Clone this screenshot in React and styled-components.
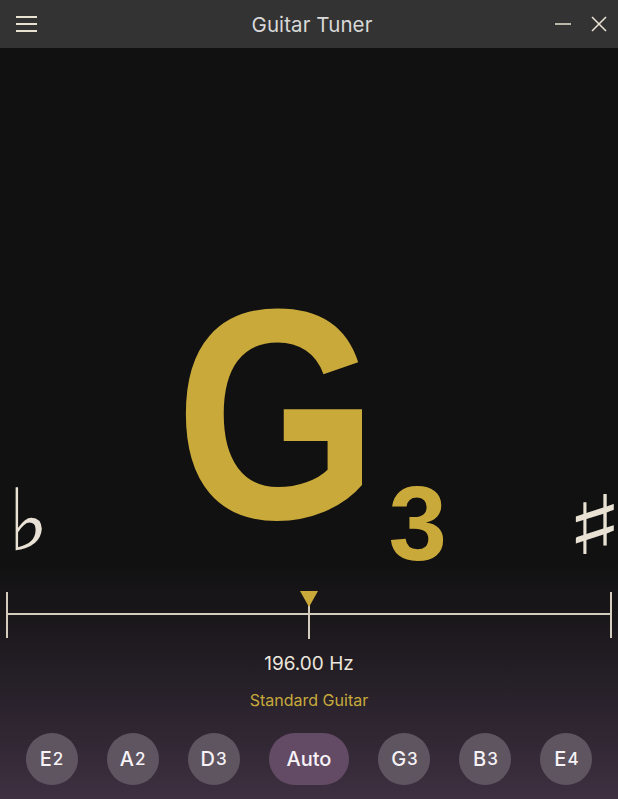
import React from "react";
import styled, { createGlobalStyle } from "styled-components";

const Global = createGlobalStyle`
  html, body { margin: 0; padding: 0; background: #111111; }
  body { font-family: Inter, "Noto Sans", sans-serif; }
  * { box-sizing: border-box; }
`;

const Window = styled.div`
  width: 618px;
  height: 799px;
  display: flex;
  flex-direction: column;
  overflow: hidden;
`;

const TitleBar = styled.header`
  height: 48px;
  flex: none;
  background: #333333;
  display: grid;
  grid-template-columns: 1fr auto 1fr;
  align-items: center;
  padding: 0 10px 0 16px;
`;

const Title = styled.h1`
  margin: 0;
  font-family: Inter, "Noto Sans", sans-serif;
  font-weight: 400;
  font-size: 20.5px;
  color: #d9d9d9;
  letter-spacing: 0.1px;
`;

const IconButton = styled.button`
  background: none;
  border: 0;
  padding: 0;
  margin: 0;
  width: ${(p) => p.$w || 22}px;
  height: 22px;
  display: flex;
  align-items: center;
  justify-content: center;
  color: #e8e2d2;
  cursor: pointer;
`;

const WindowControls = styled.div`
  display: flex;
  justify-content: flex-end;
  align-items: center;
  gap: 18px;
`;

const Main = styled.main`
  flex: 1;
  display: flex;
  flex-direction: column;
  background: linear-gradient(
    to bottom,
    #111111 0%,
    #111111 68%,
    #1a171b 76%,
    #251f27 84%,
    #312733 92%,
    #3e3041 100%
  );
`;

const Stage = styled.section`
  flex: 1;
  display: grid;
  grid-template-columns: 40px 1fr 40px;
  align-items: end;
  padding: 0 5px 0 8px;
`;

const Accidental = styled.span`
  font-family: ${(p) => p.$font || '"DejaVu Serif", serif'};
  font-size: ${(p) => p.$size}px;
  line-height: 1;
  color: #e9e2d4;
  display: inline-block;
  letter-spacing: ${(p) => p.$ls || 0}em;
  transform: scaleX(${(p) => p.$sx || 1});
  transform-origin: left bottom;
  margin-bottom: ${(p) => p.$mb}px;
  margin-left: ${(p) => p.$ml || 0}px;
`;

const NoteGroup = styled.div`
  display: flex;
  justify-content: center;
  align-items: flex-end;
  padding-right: 14px;
`;

const NoteLetter = styled.span`
  font-family: "Liberation Sans", Arial, sans-serif;
  font-weight: 700;
  font-size: 300px;
  line-height: 1;
  color: #c9a93a;
  display: inline-block;
  transform: scaleX(0.87);
  margin-bottom: 11px;
`;

const Octave = styled.span`
  font-family: "Liberation Sans", Arial, sans-serif;
  font-weight: 700;
  font-size: 105px;
  line-height: 1;
  color: #c9a93a;
  display: inline-block;
  margin-left: -5px;
  margin-bottom: -1px;
`;

const Meter = styled.svg`
  display: block;
  margin: 16px auto 0;
  overflow: visible;
`;

const Frequency = styled.div`
  margin-top: 13px;
  text-align: center;
  font-size: 19px;
  line-height: 24px;
  color: #ece6dc;
`;

const Tuning = styled.div`
  margin-top: 14px;
  text-align: center;
  font-size: 16px;
  line-height: 20px;
  color: #c8aa3b;
`;

const StringRow = styled.nav`
  margin-top: 23px;
  padding-bottom: 14px;
  display: flex;
  justify-content: center;
  gap: 29px;
`;

const StringButton = styled.button`
  height: 52px;
  min-width: 52px;
  padding: 0 ${(p) => (p.$wide ? 18 : 0)}px;
  border-radius: 26px;
  border: 0;
  background: ${(p) => (p.$active ? "#644b65" : "#5f5561")};
  color: #f6f2f6;
  font-family: Inter, "Noto Sans", sans-serif;
  font-weight: 500;
  font-size: 20px;
  display: flex;
  align-items: center;
  justify-content: center;
  cursor: pointer;
`;

const Sub = styled.span`
  font-size: 17px;
  margin-left: 1px;
`;

const strings = [
  ["E", "2"],
  ["A", "2"],
  ["D", "3"],
  null,
  ["G", "3"],
  ["B", "3"],
  ["E", "4"],
];

export default function App() {
  const cents = 0;
  const width = 604;
  const px = width / 2 + (cents / 50) * (width / 2);
  return (
    <>
      <Global />
      <Window>
        <TitleBar>
          <IconButton aria-label="Menu">
            <svg width="22" height="16" viewBox="0 0 22 16">
              <g stroke="#e8e2d2" strokeWidth="2">
                <line x1="0" y1="1" x2="21" y2="1" />
                <line x1="0" y1="8" x2="21" y2="8" />
                <line x1="0" y1="15" x2="21" y2="15" />
              </g>
            </svg>
          </IconButton>
          <Title>Guitar Tuner</Title>
          <WindowControls>
            <IconButton aria-label="Minimize" $w={18}>
              <svg width="16" height="16" viewBox="0 0 16 16">
                <line x1="0" y1="8" x2="16" y2="8" stroke="#e8e2d2" strokeWidth="1.5" />
              </svg>
            </IconButton>
            <IconButton aria-label="Close" $w={18}>
              <svg width="16" height="16" viewBox="0 0 16 16">
                <g stroke="#e8e2d2" strokeWidth="1.6">
                  <line x1="1" y1="1" x2="15" y2="15" />
                  <line x1="15" y1="1" x2="1" y2="15" />
                </g>
              </svg>
            </IconButton>
          </WindowControls>
        </TitleBar>
        <Main>
          <Stage>
            <Accidental $font='"DejaVu Sans", sans-serif' $size={86} $mb={12}>♭</Accidental>
            <NoteGroup>
              <NoteLetter>G</NoteLetter>
              <Octave>3</Octave>
            </NoteGroup>
            <Accidental $size={82} $mb={8} $sx={1.45} $ml={-7} $ls={-0.18}>♯</Accidental>
          </Stage>
          <Meter width={width + 4} height="48" viewBox={`-2 0 ${width + 4} 48`}>
            <g stroke="#d4ccbd" strokeWidth="2">
              <line x1="0" y1="23" x2={width} y2="23" />
              <line x1="0" y1="1" x2="0" y2="47" />
              <line x1={width} y1="1" x2={width} y2="47" />
              <line x1={px} y1="12" x2={px} y2="48" />
            </g>
            <polygon
              points={`${px - 9},0 ${px + 9},0 ${px},16`}
              fill="#c9a93a"
            />
          </Meter>
          <Frequency>196.00 Hz</Frequency>
          <Tuning>Standard Guitar</Tuning>
          <StringRow>
            {strings.map((s, i) =>
              s ? (
                <StringButton key={i}>
                  {s[0]}
                  <Sub>{s[1]}</Sub>
                </StringButton>
              ) : (
                <StringButton key={i} $active $wide>
                  Auto
                </StringButton>
              )
            )}
          </StringRow>
        </Main>
      </Window>
    </>
  );
}
